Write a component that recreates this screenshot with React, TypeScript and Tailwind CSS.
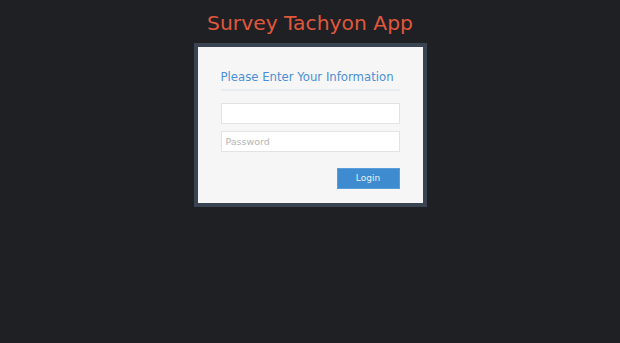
export default function App() {
  return (
    <div className="min-h-[343px] bg-[#1e2024] pt-[10px] font-['DejaVu_Sans',sans-serif]">
      <h1 className="text-center text-[20.3px] leading-[26px] text-[#e0573d]">
        Survey Tachyon App
      </h1>

      <div className="mx-auto mt-[7px] w-[233px] bg-[#3a4352] p-[4px]">
        <div className="bg-[#f6f6f6] px-[23px] pt-[22px] pb-[14px]">
          <h2 className="whitespace-nowrap border-b-2 border-[#e9ecef] pb-[4px] text-[11.7px] leading-[16px] text-[#4a8fd6]">
            Please Enter Your Information
          </h2>

          <form className="mt-[12px] flex flex-col gap-[7px]">
            <input
              type="text"
              className="h-[21px] w-full border border-[#e3e3e3] bg-white px-[4px] text-[9.5px] outline-none"
            />
            <input
              type="password"
              placeholder="Password"
              className="h-[21px] w-full border border-[#e3e3e3] bg-white px-[4px] text-[9.5px] outline-none placeholder:text-[#b5b5b5]"
            />
            <div className="mt-[9px] flex justify-end">
              <button
                type="button"
                className="h-[21px] w-[63px] border border-[#5a9ddb] bg-[#3e8bd0] text-[9px] text-[#e8f0f8]"
              >
                Login
              </button>
            </div>
          </form>
        </div>
      </div>
    </div>
  );
}
